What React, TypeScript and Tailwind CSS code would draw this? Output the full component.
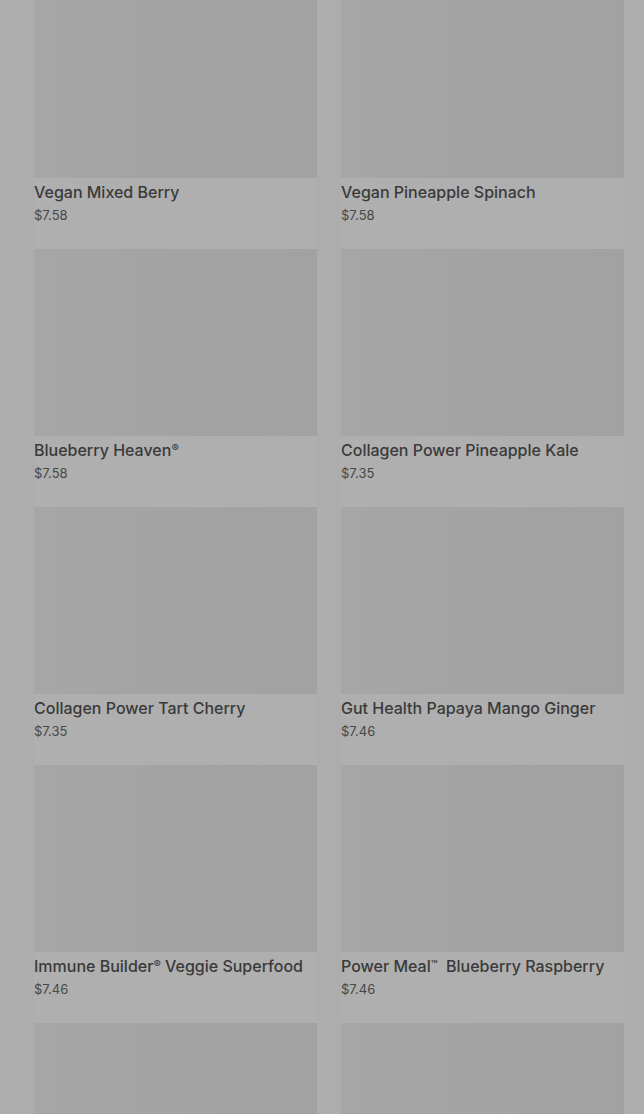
const PRODUCTS = [
  { name: "Vegan Mixed Berry", price: "$7.58" },
  { name: "Vegan Pineapple Spinach", price: "$7.58" },
  { name: "Blueberry Heaven®", price: "$7.58" },
  { name: "Collagen Power Pineapple Kale", price: "$7.35" },
  { name: "Collagen Power Tart Cherry", price: "$7.35" },
  { name: "Gut Health Papaya Mango Ginger", price: "$7.46" },
  { name: "Immune Builder® Veggie Superfood", price: "$7.46" },
  { name: "Power Meal™  Blueberry Raspberry", price: "$7.46" },
  { name: "", price: "" },
  { name: "", price: "" },
];

// small raised ® / ™ marks like the store's title font
function Title({ text }: { text: string }) {
  const parts = text.split(/([®™])/);
  return (
    <>
      {parts.map((part, i) =>
        part === "®" || part === "™" ? (
          <span key={i} className="relative -top-[4px] text-[11px] leading-none">
            {part}
          </span>
        ) : (
          <span key={i}>{part}</span>
        )
      )}
    </>
  );
}

function ProductCard({ name, price }: { name: string; price: string }) {
  return (
    <div className="bg-[#afafaf] pb-[25px]">
      <div className="h-[187px] w-full bg-gradient-to-r from-[#a6a6a6] via-[#a3a3a3] to-[#a2a2a2]" />
      {name && (
        <>
          <p className="mt-[4px] h-5 whitespace-pre text-[16px] font-medium leading-5 text-[#3a3a3a]">
            <Title text={name} />
          </p>
          <p className="mt-[4px] text-[13px] leading-[18px] text-[#474747]">{price}</p>
        </>
      )}
    </div>
  );
}

export default function App() {
  return (
    <div
      className="h-[1114px] overflow-hidden bg-[#adadad]"
      style={{ fontFamily: "Inter, Roboto, 'Liberation Sans', sans-serif" }}
    >
      <div className="-mt-[9px] grid grid-cols-2 gap-x-6 pl-[34px] pr-[20px]">
        {PRODUCTS.map((p, i) => (
          <ProductCard key={i} name={p.name} price={p.price} />
        ))}
      </div>
    </div>
  );
}
